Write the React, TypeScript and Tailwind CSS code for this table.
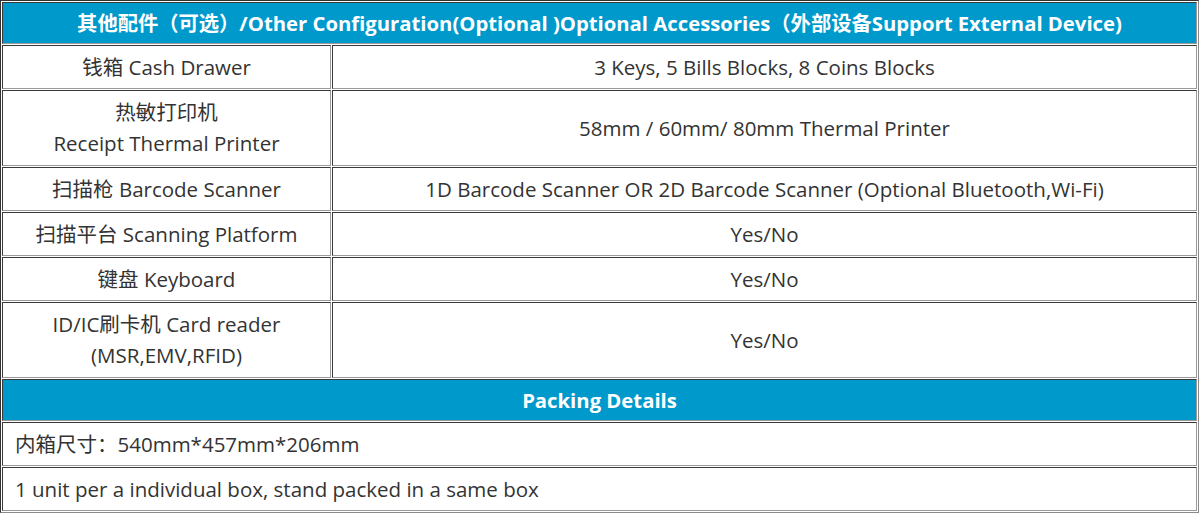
import React from "react";

const font = { fontFamily: '"Open Sans", "Noto Sans CJK SC", sans-serif' };

const cell =
  "border border-t-[#3a3a3a] border-l-[#3a3a3a] border-b-[#9a9a9a] border-r-[#9a9a9a] px-2 py-[6px] leading-[30px]";

const rows: { left: string[]; right: string }[] = [
  { left: ["钱箱 Cash Drawer"], right: "3 Keys, 5 Bills Blocks, 8 Coins Blocks" },
  { left: ["热敏打印机", "Receipt Thermal Printer"], right: "58mm / 60mm/ 80mm Thermal Printer" },
  {
    left: ["扫描枪 Barcode Scanner"],
    right: "1D Barcode Scanner OR 2D Barcode Scanner (Optional Bluetooth,Wi-Fi)",
  },
  { left: ["扫描平台 Scanning Platform"], right: "Yes/No" },
  { left: ["键盘 Keyboard"], right: "Yes/No" },
  { left: ["ID/IC刷卡机 Card reader", "(MSR,EMV,RFID)"], right: "Yes/No" },
];

const head =
  "border border-t-[#3a3a3a] border-l-[#3a3a3a] border-b-[#9a9a9a] border-r-[#9a9a9a] px-2 py-[5px] leading-[30px] bg-[#0099cc] text-white font-bold text-center text-[20.3px]";

export default function App() {
  return (
    <div className="bg-white w-[1199px] h-[514px] overflow-hidden" style={font}>
      <table className="w-[1199px] border-separate border-spacing-[1px] border border-t-[#333] border-l-[#333] border-r-[#8a8a8a] border-b-[#8a8a8a] text-[20.5px] text-[#333]">
        <colgroup>
          <col className="w-[329px]" />
          <col />
        </colgroup>
        <tbody>
          <tr>
            <td colSpan={2} className={head}>
              其他配件（可选）/Other Configuration(Optional )Optional Accessories（外部设备Support External Device)
            </td>
          </tr>
          {rows.map((r, i) => (
            <tr key={i}>
              <td className={`${cell} text-center ${r.left.length > 1 ? "leading-[31px]" : ""}`}>
                {r.left.map((l, j) => (
                  <div key={j}>{l}</div>
                ))}
              </td>
              <td className={`${cell} text-center`}>{r.right}</td>
            </tr>
          ))}
          <tr>
            <td colSpan={2} className={head}>
              Packing Details
            </td>
          </tr>
          <tr>
            <td colSpan={2} className={`${cell} pl-[12px]`}>
              内箱尺寸：540mm*457mm*206mm
            </td>
          </tr>
          <tr>
            <td colSpan={2} className={`${cell} pl-[12px]`}>
              1 unit per a individual box, stand packed in a same box
            </td>
          </tr>
        </tbody>
      </table>
    </div>
  );
}
